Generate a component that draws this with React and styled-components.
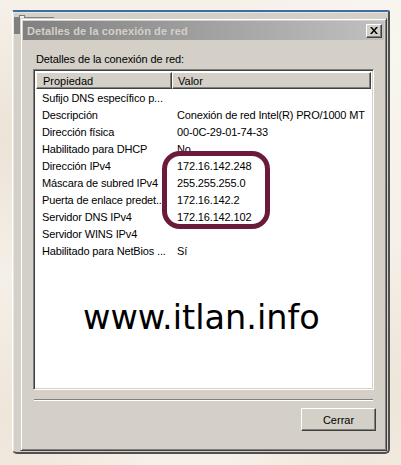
import React from "react";
import styled, { createGlobalStyle } from "styled-components";

const rows = [
  ["Sufijo DNS específico p...", ""],
  ["Descripción", "Conexión de red Intel(R) PRO/1000 MT"],
  ["Dirección física", "00-0C-29-01-74-33"],
  ["Habilitado para DHCP", "No"],
  ["Dirección IPv4", "172.16.142.248"],
  ["Máscara de subred IPv4", "255.255.255.0"],
  ["Puerta de enlace predet...", "172.16.142.2"],
  ["Servidor DNS IPv4", "172.16.142.102"],
  ["Servidor WINS IPv4", ""],
  ["Habilitado para NetBios ...", "Sí"],
];

const GlobalStyle = createGlobalStyle`
  html, body {
    margin: 0;
    padding: 0;
  }
  body {
    font-family: "Liberation Sans", Arial, sans-serif;
  }
  * {
    box-sizing: border-box;
  }
`;

const App = () => {
  return (
    <>
      <GlobalStyle />
      <Desktop>
        <BackWindow>
          <BackTitle />
          <BackIcon />
        </BackWindow>
        <Dialog>
          <TitleBar>
            <TitleText>Detalles de la conexión de red</TitleText>
            <CloseButton>
              <svg width="8" height="7" viewBox="0 0 8 7">
                <path
                  d="M0 0h2l2 2.5L6 0h2L5 3.5 8 7H6L4 4.5 2 7H0l3-3.5z"
                  fill="#000"
                />
              </svg>
            </CloseButton>
          </TitleBar>
          <Body>
            <Caption>Detalles de la conexión de red:</Caption>
            <ListView>
              <Header>
                <HeaderCell>Propiedad</HeaderCell>
                <HeaderCell last>Valor</HeaderCell>
              </Header>
              {rows.map(([prop, value]) => (
                <Row key={prop}>
                  <Cell>{prop}</Cell>
                  <Cell value>{value}</Cell>
                </Row>
              ))}
              <Highlight />
              <Watermark>www.itlan.info</Watermark>
            </ListView>
            <Separator />
            <ButtonRow>
              <Button>Cerrar</Button>
            </ButtonRow>
          </Body>
        </Dialog>
      </Desktop>
    </>
  );
};

export default App;

const Desktop = styled.div`
  position: relative;
  width: 401px;
  height: 465px;
  overflow: hidden;
  background-color: #f5f0e8;
  background-image: radial-gradient(
      ellipse at 8% 30%,
      rgba(226, 212, 194, 0.5),
      transparent 30%
    ),
    radial-gradient(ellipse at 90% 85%, rgba(230, 216, 198, 0.55), transparent 28%),
    radial-gradient(ellipse at 5% 90%, rgba(232, 220, 204, 0.55), transparent 25%),
    radial-gradient(ellipse at 95% 10%, rgba(250, 247, 242, 0.8), transparent 30%);
`;

const BackWindow = styled.div`
  position: absolute;
  left: 12px;
  top: 10px;
  width: 378px;
  height: 444px;
  background: #d4d0c8;
  border-top: 2px solid #3d6ca6;
  border-left: 1px solid #ffffff;
  border-right: 2px solid #505050;
  border-bottom: 2px solid #505050;
  border-radius: 2px 2px 5px 5px;
  box-shadow: inset 1px 1px 0 #e8e6e0;
`;

const BackTitle = styled.div`
  margin: 5px 0 0 1px;
  width: 40px;
  height: 17px;
  background: #808080;
`;

const BackIcon = styled.div`
  position: absolute;
  left: 6px;
  top: 3px;
  width: 6px;
  height: 6px;
  background: #f0f0f0;
  border: 1px solid #7a7a7a;
`;

const Dialog = styled.div`
  position: absolute;
  left: 20px;
  top: 18px;
  width: 367px;
  height: 433px;
  display: flex;
  flex-direction: column;
  background: #d4d0c8;
  border-top: 1px solid #d4d0c8;
  border-left: 1px solid #d4d0c8;
  border-right: 1px solid #404040;
  border-bottom: 1px solid #404040;
  box-shadow: inset 1px 1px 0 #ffffff, inset -1px -1px 0 #808080;
  padding: 2px;
`;

const TitleBar = styled.div`
  height: 19px;
  display: flex;
  align-items: center;
  justify-content: space-between;
  padding: 0 2px 0 4px;
  background: linear-gradient(to right, #808080, #c0c0c0);
`;

const TitleText = styled.span`
  font-family: "Liberation Sans", Arial, sans-serif;
  font-weight: bold;
  font-size: 11px;
  color: #d4d0c8;
  letter-spacing: 0.1px;
`;

const CloseButton = styled.div`
  width: 16px;
  height: 14px;
  display: flex;
  align-items: center;
  justify-content: center;
  background: #d4d0c8;
  border-top: 1px solid #ffffff;
  border-left: 1px solid #ffffff;
  border-right: 1px solid #404040;
  border-bottom: 1px solid #404040;
  box-shadow: inset -1px -1px 0 #808080;
`;

const Body = styled.div`
  flex: 1;
  display: flex;
  flex-direction: column;
  padding: 13px 10px 0 10px;
`;

const Caption = styled.div`
  font-size: 11px;
  line-height: 13px;
  color: #000;
  padding-left: 3px;
  letter-spacing: -0.1px;
`;

const ListView = styled.div`
  position: relative;
  margin-top: 3px;
  height: 321px;
  background: #ffffff;
  border-top: 1px solid #808080;
  border-left: 1px solid #808080;
  border-right: 1px solid #ffffff;
  border-bottom: 1px solid #ffffff;
  box-shadow: inset 1px 1px 0 #404040, inset -1px -1px 0 #d4d0c8;
  padding: 2px;
`;

const Header = styled.div`
  display: grid;
  grid-template-columns: 136px 1fr;
  height: 17px;
`;

const HeaderCell = styled.div`
  display: flex;
  align-items: center;
  padding-left: ${(p) => (p.last ? "5px" : "6px")};
  font-size: 11px;
  color: #000;
  background: #d4d0c8;
  border-top: 1px solid #ffffff;
  border-left: 1px solid #ffffff;
  border-right: 1px solid #404040;
  border-bottom: 1px solid #404040;
  box-shadow: inset -1px -1px 0 #808080;
`;

const Row = styled.div`
  display: grid;
  grid-template-columns: 136px 1fr;
  height: 17px;
  align-items: center;
`;

const Cell = styled.div`
  padding-left: ${(p) => (p.value ? "5px" : "6px")};
  font-size: 11px;
  color: #000;
  white-space: nowrap;
  overflow: hidden;
  letter-spacing: -0.15px;
`;

const Highlight = styled.div`
  position: absolute;
  left: 128px;
  top: 81px;
  width: 108px;
  height: 78px;
  border: 5px solid #6c1a3b;
  border-radius: 18px;
  pointer-events: none;
`;

const Watermark = styled.div`
  position: absolute;
  left: 49px;
  top: 231px;
  font-family: "DejaVu Sans", Verdana, sans-serif;
  font-size: 33.5px;
  line-height: 33px;
  color: #000;
  white-space: nowrap;
`;

const Separator = styled.div`
  margin: 9px 1px 0 1px;
  height: 2px;
  border-top: 1px solid #808080;
  border-bottom: 1px solid #ffffff;
`;

const ButtonRow = styled.div`
  display: flex;
  justify-content: flex-end;
  margin-top: 7px;
  margin-right: -2px;
`;

const Button = styled.div`
  width: 75px;
  height: 23px;
  display: flex;
  align-items: center;
  justify-content: center;
  font-size: 11px;
  color: #000;
  background: #d4d0c8;
  border-top: 1px solid #ffffff;
  border-left: 1px solid #ffffff;
  border-right: 1px solid #404040;
  border-bottom: 1px solid #404040;
  box-shadow: inset -1px -1px 0 #808080;
`;
